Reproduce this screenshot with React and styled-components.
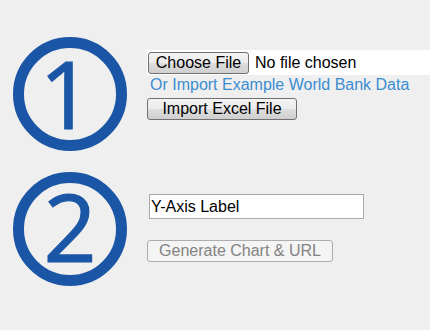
import React from "react";
import styled, { createGlobalStyle } from "styled-components";

const Global = createGlobalStyle`
  html, body {
    margin: 0;
    padding: 0;
    background: #efefef;
    overflow: hidden;
  }
  body {
    font-family: "Liberation Sans", Arial, sans-serif;
    font-size: 16px;
  }
`;

const Page = styled.div`
  padding: 37px 0 0 13px;
  display: flex;
  flex-direction: column;
  gap: 21px;
`;

const Step = styled.section`
  display: flex;
  align-items: flex-start;
  gap: 20px;
`;

const Badge = styled.div`
  width: 114px;
  height: 114px;
  flex: none;
  box-sizing: border-box;
  border: 11px solid #1b56a6;
  border-radius: 50%;
  display: flex;
  align-items: center;
  justify-content: center;
  color: #1b56a6;
  font-family: "Open Sans", "Noto Sans", sans-serif;
  font-weight: 400;
  font-size: 93px;
  line-height: 1;
  -webkit-text-stroke: 1.2px #1b56a6;
  padding-bottom: ${(p) => p.$lift || 0}px;
  padding-right: ${(p) => p.$shift || 0}px;
`;

const Controls = styled.div`
  display: flex;
  flex-direction: column;
  align-items: flex-start;
  margin-top: ${(p) => p.$top}px;
`;

const FileBox = styled.div`
  display: flex;
  align-items: center;
  width: 283px;
  box-sizing: border-box;
  padding: 1px;
  background: #ffffff;
  height: 25px;
`;

const Button = styled.button`
  box-sizing: border-box;
  height: 22px;
  width: ${(p) => p.$w}px;
  margin: 0;
  padding: 0;
  border: 1px solid ${(p) => (p.disabled ? "#adadad" : "#707070")};
  border-radius: 3px;
  background: ${(p) =>
    p.disabled
      ? "#f4f4f4"
      : "linear-gradient(#f3f3f3 0%, #ebebeb 50%, #dddddd 51%, #cfcfcf 100%)"};
  color: ${(p) => (p.disabled ? "#838383" : "#000000")};
  font-family: "Liberation Sans", Arial, sans-serif;
  font-size: 16px;
  line-height: 20px;
  text-align: center;
  cursor: default;
`;

const FileStatus = styled.span`
  margin-left: 6px;
  color: #000;
  font-size: 16px;
`;

const LinkText = styled.a`
  display: block;
  margin: 1px 0 4px 3px;
  font-size: 16px;
  line-height: 18px;
  color: #3b8dd2;
  text-decoration: none;
  cursor: pointer;
`;

const TextField = styled.input`
  box-sizing: border-box;
  width: 215px;
  height: 25px;
  margin: 0 0 21px 2px;
  padding: 0 1px;
  border: 1px solid #a9a9a9;
  background: #ffffff;
  font-family: "Liberation Sans", Arial, sans-serif;
  font-size: 16px;
  color: #000;
  outline: none;
`;

export default function App() {
  return (
    <>
      <Global />
      <Page>
        <Step>
          <Badge $lift={2} $shift={8}>1</Badge>
          <Controls $top={13}>
            <FileBox>
              <Button $w={101}>Choose File</Button>
              <FileStatus>No file chosen</FileStatus>
            </FileBox>
            <LinkText>Or Import Example World Bank Data</LinkText>
            <Button $w={150}>Import Excel File</Button>
          </Controls>
        </Step>
        <Step>
          <Badge $lift={6}>2</Badge>
          <Controls $top={22}>
            <TextField defaultValue="Y-Axis Label" />
            <Button $w={186} disabled>
              Generate Chart &amp; URL
            </Button>
          </Controls>
        </Step>
      </Page>
    </>
  );
}
